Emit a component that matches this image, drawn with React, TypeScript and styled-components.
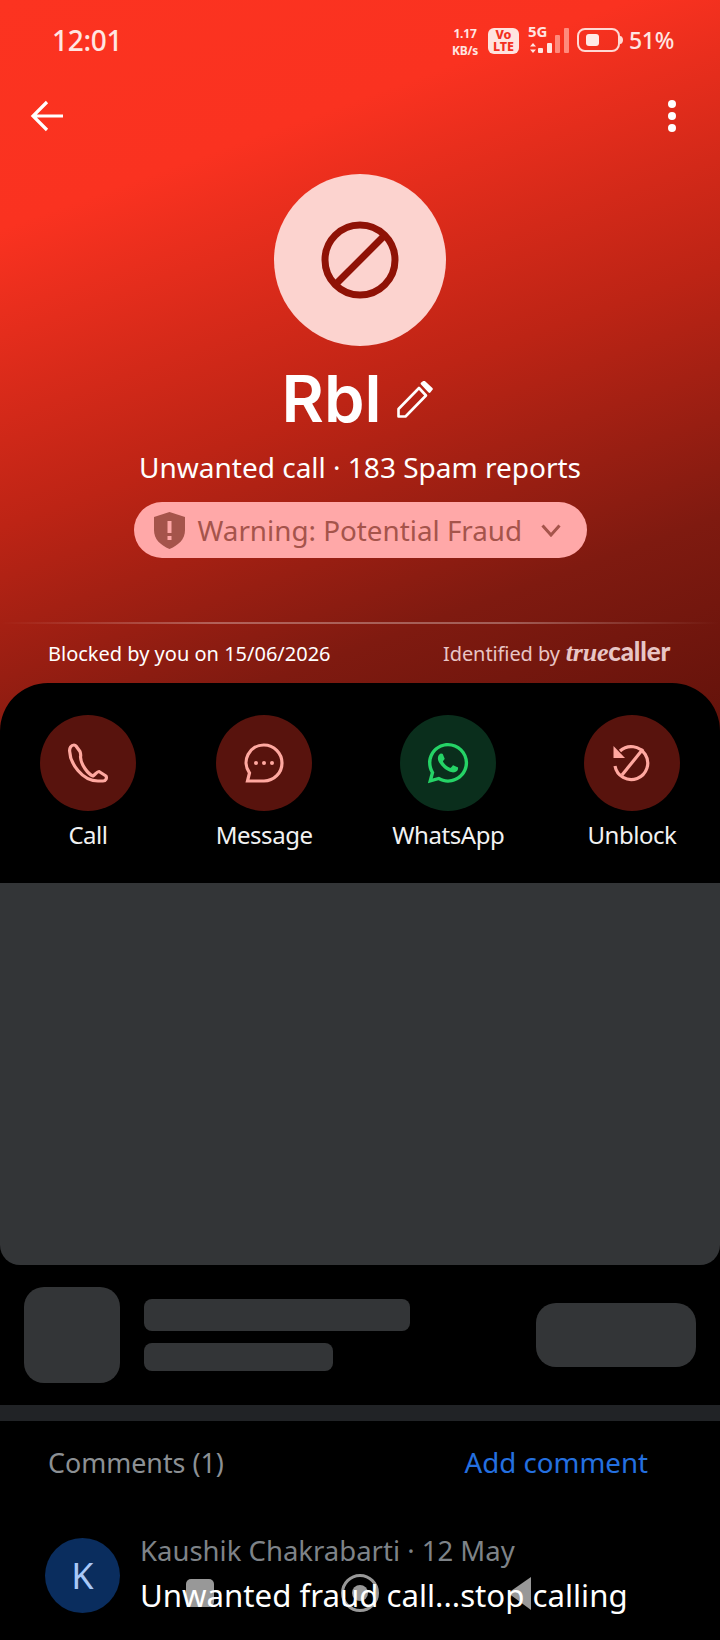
import React from "react";
import styled, { createGlobalStyle } from "styled-components";
import { FaWhatsapp } from "react-icons/fa";

const Global = createGlobalStyle`
  html, body { margin: 0; padding: 0; background: #000; }
  body { font-family: "Noto Sans", "Open Sans", sans-serif; }
  * { box-sizing: border-box; }
`;

const Screen = styled.div`
  position: relative;
  width: 720px;
  height: 1640px;
  overflow: hidden;
  background: #000;
`;

const TopArea = styled.div`
  background: linear-gradient(160deg, #fc3320 0%, #fa3220 20%, #bd2415 46%, #7f1a10 68%, #4f0d07 100%);
`;

const Hero = styled.header`
  height: 683px;
  display: flex;
  flex-direction: column;
`;

const StatusBar = styled.div`
  height: 80px;
  padding: 0 46px 0 52px;
  display: flex;
  align-items: center;
  justify-content: space-between;
  color: #ffe6e2;
`;

const Time = styled.span`
  font-size: 28px;
  font-weight: 500;
  letter-spacing: -0.3px;
`;

const StatusRight = styled.div`
  display: flex;
  align-items: center;
`;

const Speed = styled.div`
  width: 32px;
  font-size: 12px;
  line-height: 17px;
  font-weight: 700;
  letter-spacing: -0.2px;
  text-align: center;
  white-space: nowrap;
  margin-right: 7px;
  margin-top: 3px;
`;

const Volte = styled.div`
  width: 31px;
  height: 26px;
  border-radius: 6px;
  background: #ffe3df;
  color: #f33020;
  font-size: 12.5px;
  line-height: 12px;
  font-weight: 800;
  text-align: center;
  padding-top: 1px;
  margin-right: 9px;
  margin-top: 2px;
`;

const SignalGroup = styled.div`
  position: relative;
  margin-right: 8px;
  margin-top: 2px;
`;

const FiveG = styled.span`
  position: absolute;
  top: -7px;
  left: 0;
  font-size: 15px;
  line-height: 20px;
  font-weight: 700;
`;

const Signal = styled.svg`
  display: block;
`;

const Percent = styled.span`
  font-size: 23px;
  font-weight: 500;
  margin-left: 6px;
  letter-spacing: -0.3px;
`;

const NavRow = styled.div`
  height: 72px;
  padding: 0 42px 0 30px;
  display: flex;
  align-items: center;
  justify-content: space-between;
`;

const Avatar = styled.div`
  width: 172px;
  height: 172px;
  border-radius: 50%;
  margin: 22px auto 0;
  background: #fcd3cf;
  display: flex;
  align-items: center;
  justify-content: center;
`;

const NameRow = styled.div`
  margin-top: 15px;
  height: 76px;
  padding-right: 5px;
  display: flex;
  align-items: center;
  justify-content: center;
  gap: 16px;
`;

const Name = styled.h1`
  margin: 0;
  font-family: Inter, sans-serif;
  font-size: 65px;
  line-height: 76px;
  font-weight: 600;
  color: #fff;
`;

const Subtitle = styled.div`
  margin-top: 12px;
  text-align: center;
  color: #fff;
  font-size: 28px;
  line-height: 36px;
`;

const Pill = styled.div`
  align-self: center;
  margin-top: 17px;
  width: 453px;
  height: 56px;
  border-radius: 28px;
  background: #ffa8a8;
  color: #a5544b;
  display: flex;
  align-items: center;
  padding-left: 20px;
  font-size: 27.8px;
`;

const PillText = styled.span`
  margin-left: 13px;
  flex: 1;
`;

const Chevron = styled.svg`
  margin-right: 26px;
`;

const Divider = styled.div`
  height: 2px;
  margin-top: 64px;
  background: linear-gradient(90deg, rgba(255,255,255,0), rgba(255,255,255,0.3) 30%, rgba(255,255,255,0.3) 70%, rgba(255,255,255,0));
`;

const InfoRow = styled.div`
  height: 58px;
  padding: 0 50px 0 48px;
  display: flex;
  align-items: center;
  justify-content: space-between;
  font-size: 20px;
  color: #fff;
`;

const Identified = styled.div`
  display: flex;
  align-items: center;
  color: #e8c5c5;
  gap: 6px;
  letter-spacing: -0.1px;
`;

const Brand = styled.span`
  font-family: "Lato", sans-serif;
  font-size: 26px;
  font-weight: 900;
  letter-spacing: -0.2px;
  margin-top: -4px;
`;

const BrandItalic = styled.span`
  font-family: "Liberation Serif", serif;
  font-style: italic;
`;

const ActionPanel = styled.section`
  height: 200px;
  background: #000;
  border-radius: 48px 48px 0 0;
  padding: 32px 40px 0;
  display: flex;
  justify-content: space-between;
  align-items: flex-start;
`;

const Action = styled.div`
  display: flex;
  flex-direction: column;
  align-items: center;
  gap: 8px;
  min-width: 96px;
`;

const ActionCircle = styled.div<{ $green?: boolean }>`
  width: 96px;
  height: 96px;
  border-radius: 50%;
  background: ${(p) => (p.$green ? "#0a2e1c" : "#58130d")};
  color: ${(p) => (p.$green ? "#25d366" : "#ffa8a0")};
  display: flex;
  align-items: center;
  justify-content: center;
`;

const ActionLabel = styled.span`
  color: #f2f2f2;
  font-size: 24px;
  line-height: 32px;
  letter-spacing: -0.45px;
  white-space: nowrap;
`;

const AdCard = styled.div`
  height: 382px;
  background: #333537;
  border-radius: 0 0 20px 20px;
`;

const SkeletonRow = styled.div`
  height: 140px;
  padding: 22px 24px 0;
  display: flex;
  align-items: flex-start;
`;

const SkeletonThumb = styled.div`
  width: 96px;
  height: 96px;
  border-radius: 20px;
  background: #333537;
`;

const SkeletonLines = styled.div`
  margin-left: 24px;
  padding-top: 12px;
  flex: 1;
  display: flex;
  flex-direction: column;
  gap: 12px;
`;

const SkeletonLine = styled.div<{ $w: number; $h: number }>`
  width: ${(p) => p.$w}px;
  height: ${(p) => p.$h}px;
  border-radius: 8px;
  background: #333537;
`;

const SkeletonButton = styled.div`
  width: 160px;
  height: 64px;
  margin-top: 16px;
  border-radius: 20px;
  background: #333537;
`;

const Band = styled.div`
  height: 16px;
  background: #212326;
`;

const CommentsHead = styled.div`
  height: 82px;
  padding: 0 72px 0 48px;
  display: flex;
  align-items: center;
  justify-content: space-between;
`;

const CommentsTitle = styled.span`
  color: #8c9094;
  font-size: 26.8px;
`;

const AddComment = styled.span`
  color: #2470e0;
  font-size: 27.7px;
`;

const Comment = styled.div`
  position: relative;
  z-index: 1;
  margin-top: 30px;
  padding-left: 45px;
  display: flex;
  align-items: flex-start;
`;

const CommentAvatar = styled.div`
  width: 75px;
  height: 75px;
  margin-top: 5px;
  border-radius: 50%;
  background: #0a2d5e;
  color: #a8c8f8;
  font-size: 36px;
  display: flex;
  align-items: center;
  justify-content: center;
`;

const CommentBody = styled.div`
  margin-left: 20px;
`;

const CommentMeta = styled.div`
  color: #7e8388;
  font-size: 27.5px;
  line-height: 36px;
`;

const CommentText = styled.div`
  color: #fff;
  font-size: 31.2px;
  line-height: 42px;
  margin-top: 5px;
  white-space: nowrap;
`;

const NavOverlay = styled.svg`
  position: absolute;
  left: 0;
  bottom: 0;
  pointer-events: none;
`;

export default function App() {
  return (
    <Screen>
      <Global />
      <TopArea>
        <Hero>
          <StatusBar>
            <Time>12:01</Time>
            <StatusRight>
              <Speed>1.17<br />KB/s</Speed>
              <Volte>Vo<br />LTE</Volte>
              <SignalGroup>
                <FiveG>5G</FiveG>
                <Signal width="41" height="26" viewBox="0 0 41 26">
                  <path d="M5 15l3 3.5H2zM5 25l-3-3.5h6z" fill="#ffe6e2" />
                  <rect x="10" y="20" width="5" height="5" rx="1" fill="#ffe6e2" />
                  <rect x="19" y="15" width="5" height="10" rx="1" fill="#ffe6e2" />
                  <rect x="27" y="7" width="5" height="18" rx="1" fill="#ff8a7c" />
                  <rect x="36" y="0" width="5" height="25" rx="1" fill="#ff8a7c" />
                </Signal>
              </SignalGroup>
              <svg width="46" height="24" viewBox="0 0 46 24">
                <rect x="1" y="1" width="41" height="22" rx="7" fill="none" stroke="#ffd9d3" strokeWidth="2" />
                <rect x="9" y="6" width="13" height="12" rx="3" fill="#ffe9e6" />
                <path d="M43 8c2 0 3 2 3 4s-1 4-3 4z" fill="#ffd9d3" />
              </svg>
              <Percent>51%</Percent>
            </StatusRight>
          </StatusBar>
          <NavRow>
            <svg width="34" height="32" viewBox="0 0 34 32" fill="none" stroke="#fff" strokeWidth="3.2">
              <path d="M33 16H3M17 2L3 16l14 14" />
            </svg>
            <svg width="12" height="34" viewBox="0 0 12 34" fill="#fff">
              <circle cx="6" cy="5" r="4" />
              <circle cx="6" cy="17" r="4" />
              <circle cx="6" cy="29" r="4" />
            </svg>
          </NavRow>
          <Avatar>
            <svg width="80" height="80" viewBox="0 0 80 80" fill="none" stroke="#8f1206" strokeWidth="7">
              <circle cx="40" cy="40" r="35" />
              <path d="M15 65L65 15" />
            </svg>
          </Avatar>
          <NameRow>
            <Name>Rbl</Name>
            <svg width="36" height="37" viewBox="0 0 36 37" fill="none" stroke="#fff" strokeWidth="2.6" strokeLinejoin="round">
              <path d="M1.5 28L22 7l7 7.5L8.5 35.5H1.5z" />
              <path d="M25 2.5l2-1.5 7.5 7-2 2.5z" fill="#fff" />
            </svg>
          </NameRow>
          <Subtitle>Unwanted call · 183 Spam reports</Subtitle>
          <Pill>
            <svg width="31" height="37" viewBox="0 0 31 37">
              <path d="M15.5 0L31 5v13c0 9-6 15-15.5 19C6 33 0 27 0 18V5z" fill="#a5544b" />
              <rect x="13.5" y="9" width="4" height="12" fill="#ffa8a8" />
              <rect x="13.5" y="24" width="4" height="4" fill="#ffa8a8" />
            </svg>
            <PillText>Warning: Potential Fraud</PillText>
            <Chevron width="20" height="13" viewBox="0 0 20 13" fill="none" stroke="#a5544b" strokeWidth="3">
              <path d="M1.5 1.5L10 11l8.5-9.5" />
            </Chevron>
          </Pill>
          <Divider />
          <InfoRow>
            <span>Blocked by you on 15/06/2026</span>
            <Identified>
              <span>Identified by</span>
              <Brand><BrandItalic>true</BrandItalic>caller</Brand>
            </Identified>
          </InfoRow>
        </Hero>
        <ActionPanel>
          <Action>
            <ActionCircle>
              <svg width="40" height="40" viewBox="0 0 40 40" fill="none" stroke="currentColor" strokeWidth="3.2" strokeLinejoin="round">
                <path d="M6 2C3 2 1.5 5 1.6 8C2 20 14 38 30 38L35 38C38 38 39 35 38 33L31 28.5C29.5 28 27 32 25 33C20 31 13 22 12.5 14C13 12 12.5 10 12 8.5L8 3C7.5 2.3 6.8 2 6 2z" />
              </svg>
            </ActionCircle>
            <ActionLabel>Call</ActionLabel>
          </Action>
          <Action>
            <ActionCircle>
              <svg width="40" height="40" viewBox="0 0 40 40" fill="none" stroke="currentColor" strokeWidth="3.2">
                <path d="M20 2a17.6 17.6 0 0 1 0 36H3.5L5.5 30A17.6 17.6 0 0 1 20 2z" />
                <circle cx="12" cy="20" r="2" fill="currentColor" stroke="none" />
                <circle cx="20" cy="20" r="2" fill="currentColor" stroke="none" />
                <circle cx="28" cy="20" r="2" fill="currentColor" stroke="none" />
              </svg>
            </ActionCircle>
            <ActionLabel>Message</ActionLabel>
          </Action>
          <Action>
            <ActionCircle $green>
              <FaWhatsapp size={46} />
            </ActionCircle>
            <ActionLabel>WhatsApp</ActionLabel>
          </Action>
          <Action>
            <ActionCircle>
              <svg width="38" height="38" viewBox="0 0 38 38" fill="none" stroke="currentColor" strokeWidth="3.2">
                <path d="M7 7A16.5 16.5 0 1 1 2 22" />
                <path d="M9 31L30 5" />
                <path d="M0.5 2L0.5 14L12 14z" fill="currentColor" stroke="none" />
              </svg>
            </ActionCircle>
            <ActionLabel>Unblock</ActionLabel>
          </Action>
        </ActionPanel>
      </TopArea>
      <AdCard />
      <SkeletonRow>
        <SkeletonThumb />
        <SkeletonLines>
          <SkeletonLine $w={266} $h={32} />
          <SkeletonLine $w={189} $h={28} />
        </SkeletonLines>
        <SkeletonButton />
      </SkeletonRow>
      <Band />
      <CommentsHead>
        <CommentsTitle>Comments (1)</CommentsTitle>
        <AddComment>Add comment</AddComment>
      </CommentsHead>
      <Comment>
        <CommentAvatar>K</CommentAvatar>
        <CommentBody>
          <CommentMeta>Kaushik Chakrabarti · 12 May</CommentMeta>
          <CommentText>Unwanted fraud call...stop calling</CommentText>
        </CommentBody>
      </Comment>
      <NavOverlay width="720" height="80" viewBox="0 0 720 80">
        <rect x="186" y="19" width="28" height="28" rx="5" fill="#989898" />
        <circle cx="360" cy="33" r="17.5" fill="none" stroke="#989898" strokeWidth="3" />
        <circle cx="360" cy="33" r="8" fill="#989898" />
        <path d="M531 17v33l-23-17z" fill="#989898" />
      </NavOverlay>
    </Screen>
  );
}
